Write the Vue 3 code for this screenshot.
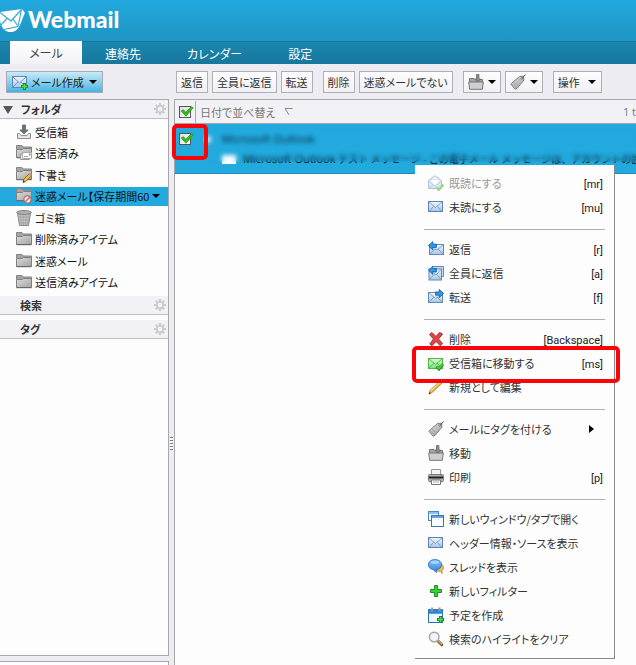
<script setup>
import { ref } from 'vue'

const tabs = ['メール', '連絡先', 'カレンダー', '設定']
const activeTab = ref('メール')

const folders = [
  { icon: 'inbox', name: '受信箱' },
  { icon: 'sent', name: '送信済み' },
  { icon: 'draft', name: '下書き' },
  { icon: 'spam', name: '迷惑メール【保存期間60', selected: true },
  { icon: 'trash', name: 'ゴミ箱' },
  { icon: 'folder', name: '削除済みアイテム' },
  { icon: 'folder', name: '迷惑メール' },
  { icon: 'folder', name: '送信済みアイテム' }
]

const toolGroups = [
  [{ label: '返信' }, { label: '全員に返信' }, { label: '転送' }],
  [{ label: '削除' }, { label: '迷惑メールでない' }],
  [{ icon: 'move', title: '移動', menu: true }, { icon: 'tag', title: 'タグ', menu: true }],
  [{ label: '操作', menu: true }]
]

const menuGroups = [
  [
    { icon: 'read', label: '既読にする', key: '[mr]', disabled: true },
    { icon: 'mail', label: '未読にする', key: '[mu]' }
  ],
  [
    { icon: 'reply', label: '返信', key: '[r]' },
    { icon: 'replyall', label: '全員に返信', key: '[a]' },
    { icon: 'forward', label: '転送', key: '[f]' }
  ],
  [
    { icon: 'delete', label: '削除', key: '[Backspace]' },
    { icon: 'notspam', label: '受信箱に移動する', key: '[ms]', marked: true },
    { icon: 'pencil', label: '新規として編集' }
  ],
  [
    { icon: 'tag', label: 'メールにタグを付ける', submenu: true },
    { icon: 'move', label: '移動' },
    { icon: 'print', label: '印刷', key: '[p]' }
  ],
  [
    { icon: 'windows', label: '新しいウィンドウ/タブで開く' },
    { icon: 'mail', label: 'ヘッダー情報・ソースを表示' },
    { icon: 'thread', label: 'スレッドを表示' },
    { icon: 'plus', label: '新しいフィルター' },
    { icon: 'calendar', label: '予定を作成' },
    { icon: 'search', label: '検索のハイライトをクリア' }
  ]
]

const allChecked = ref(true)
const rowChecked = ref(true)
</script>

<template>
  <div class="app">
    <svg class="defs" aria-hidden="true">
      <defs>
        <linearGradient id="gBlue" x1="0" y1="0" x2="0" y2="1"><stop offset="0" stop-color="#f0f6fd" /><stop offset="1" stop-color="#a9c7ea" /></linearGradient>
        <linearGradient id="gGreen" x1="0" y1="0" x2="0" y2="1"><stop offset="0" stop-color="#d8fbd2" /><stop offset="1" stop-color="#7fe07a" /></linearGradient>
        <linearGradient id="gGray" x1="0" y1="0" x2="1" y2="1"><stop offset="0" stop-color="#dcdcdc" /><stop offset="1" stop-color="#a3a3a3" /></linearGradient>
        <linearGradient id="gBubble" x1="0" y1="0" x2="0" y2="1"><stop offset="0" stop-color="#86c5fb" /><stop offset="1" stop-color="#2f7fdc" /></linearGradient>
      </defs>
      <symbol id="i-mail" viewBox="0 0 16 16">
        <rect x=".5" y="2.500" width="14" height="10" fill="url(#gBlue)" stroke="#5d84b5" />
        <path d="M1 3l6.500 5.500L14 3M1 12.500l4.500-5M14 12.500l-4.500-5" fill="none" stroke="#7698c4" stroke-width=".9" />
      </symbol>
      <symbol id="i-read" viewBox="0 0 16 16">
        <path d="M.5 5.500L7 .7l6.500 4.800v8H.5z" fill="url(#gBlue)" stroke="#6288b8" />
        <path d="M3 8V4.500h8V8L7 11z" fill="#fff" stroke="#a9bfdc" stroke-width=".7" />
        <path d="M1 6.500L7 11l6-4.500M1 13l4-3.500" fill="none" stroke="#7698c4" stroke-width=".9" />
        <path d="M8.500 12.500l2.300 2.300L15.500 9.500" fill="none" stroke="#39b21f" stroke-width="2.400" />
      </symbol>
      <symbol id="i-reply" viewBox="0 0 16 16">
        <rect x="1.500" y="3.500" width="14" height="10" fill="url(#gBlue)" stroke="#6288b8" />
        <path d="M2 13l5-5M15 13l-5-5M15 4L9 9 6.500 8" fill="none" stroke="#7698c4" stroke-width=".9" />
        <path d="M.4 4.700L4.800.6v2.500h3.600v3.300H4.800v2.500z" fill="#2f97e5" stroke="#135a9f" stroke-width=".8" />
      </symbol>
      <symbol id="i-replyall" viewBox="0 0 16 16">
        <path d="M5 1.500h10.500v10H13" fill="#c7dbf3" stroke="#6288b8" />
        <rect x="1" y="4" width="12.500" height="11" fill="url(#gBlue)" stroke="#6288b8" />
        <path d="M1.500 14.500l4.500-5M13 14.500l-4-5M13 4.500L8 10 6 8.500" fill="none" stroke="#7698c4" stroke-width=".9" />
        <path d="M.4 5.200l4.400-4v2.300h3.600v3.400H4.800v2.500z" fill="#2f97e5" stroke="#135a9f" stroke-width=".8" />
      </symbol>
      <symbol id="i-forward" viewBox="0 0 16 16">
        <rect x=".5" y="3.500" width="14" height="10" fill="url(#gBlue)" stroke="#6288b8" />
        <path d="M1 13l5-5M14 13l-5-5M1 4L7.500 9.500 10 8" fill="none" stroke="#7698c4" stroke-width=".9" />
        <path d="M15.600 4.500L11.200.4v2.500H7.600v3.300h3.600v2.500z" fill="#2f97e5" stroke="#135a9f" stroke-width=".8" />
      </symbol>
      <symbol id="i-delete" viewBox="0 0 16 16">
        <path d="M1.500 3.500L4 1.500 8 5.500l3.500-4L14.500 3 10.500 8l4 4.500-2.200 2.300L8 10.500 4 14.700 1.800 13l3.700-5z" fill="#d9474a" stroke="#b32a2e" />
      </symbol>
      <symbol id="i-notspam" viewBox="0 0 16 16">
        <rect x=".5" y="3.500" width="14" height="10" fill="url(#gGreen)" stroke="#4cb748" />
        <path d="M1 4l6.500 5.500L14 4M1 13l5-5M14 13L9 8" fill="none" stroke="#58bd54" />
        <path d="M8.500 11.500l2.500 2.700 4-5.200" fill="none" stroke="#218f1b" stroke-width="2.800" />
        <path d="M9 11.700l2 2 3.500-4.500" fill="none" stroke="#54d046" stroke-width="1.400" />
      </symbol>
      <symbol id="i-pencil" viewBox="0 0 16 16">
        <path d="M1 15l1-3.500L12 2l2 2L4 13.500z" fill="#f0be48" stroke="#9b6b1c" stroke-width=".8" />
        <path d="M11.500 2.500l1.700-1.800 2.100 2.100-1.800 1.700z" fill="#c88e92" stroke="#94555a" stroke-width=".6" />
        <path d="M2.500 12L12 3" stroke="#fff0b0" /><path d="M.8 15.200l.7-2.200 1.400 1.400z" fill="#333" />
      </symbol>
      <symbol id="i-tag" viewBox="0 0 16 16">
        <path d="M.7 10L9.500 2.500l4-.5.500 4-7 8.500-2 .7z" fill="url(#gGray)" stroke="#777" stroke-width=".9" />
        <path d="M2.500 10l4.500 4M4 8.500l5 4" stroke="#888" stroke-width=".6" />
        <circle cx="11.800" cy="4.300" r="1" fill="#fff" stroke="#555" stroke-width=".6" />
        <path d="M12 4.500L15.500.5" stroke="#555" />
      </symbol>
      <symbol id="i-move" viewBox="0 0 16 16">
        <path d="M1.500 8V4.500H6l1 1h7.500V8" fill="#a6a6a6" stroke="#757575" />
        <path d="M.7 8h14.600l-1 7.300H1.700z" fill="#cfcfcf" stroke="#757575" />
        <path d="M8.500.5h2.400v4.500h1.800L9.700 8 6.700 5h1.800z" fill="#8d8d8d" stroke="#646464" stroke-width=".8" />
      </symbol>
      <symbol id="i-print" viewBox="0 0 16 16">
        <path d="M3.500 6V.5h9V6" fill="#f4f4f4" stroke="#999" />
        <rect x=".5" y="5.500" width="15" height="7" rx="1" fill="#b4b4b4" stroke="#777" />
        <path d="M1 7.500h14v2H1z" fill="#222" /><path d="M12 6.500h2" stroke="#4fc44f" />
        <path d="M3.500 11h9v4.500h-9z" fill="#fff" stroke="#777" /><path d="M5 13h6" stroke="#aaa" />
      </symbol>
      <symbol id="i-windows" viewBox="0 0 16 16">
        <rect x=".5" y=".5" width="10" height="9" fill="#f4f9ff" stroke="#4b86c2" /><path d="M1 2h9" stroke="#8fc2f2" stroke-width="2" />
        <rect x="3.500" y="4.500" width="12" height="11" fill="#f8fbff" stroke="#3c74ad" /><path d="M4 6h11" stroke="#5ea6e8" stroke-width="2" />
      </symbol>
      <symbol id="i-thread" viewBox="0 0 16 16">
        <path d="M8 11c2 2 4 1.500 5 1l1 2.800v-3.300c2-1.500 2-4.500 0-6z" fill="#e6b95c" stroke="#b98a31" stroke-width=".8" />
        <path d="M7 .6c8.500 0 8.500 9.600 1 10L8.500 13.500 5 10.500C-1.500 9.500-1.500.6 7 .6z" fill="url(#gBubble)" stroke="#2669b5" stroke-width=".8" />
        <ellipse cx="6.800" cy="3.200" rx="4.200" ry="1.500" fill="#b7defe" opacity=".8" />
      </symbol>
      <symbol id="i-plus" viewBox="0 0 16 16">
        <path d="M6.500 2.500h3v4h4v3h-4v4h-3v-4h-4v-3h4z" fill="#39cf37" stroke="#17952a" stroke-linejoin="round" />
      </symbol>
      <symbol id="i-calendar" viewBox="0 0 16 16">
        <rect x=".5" y="2.500" width="14" height="13" fill="#eef5fd" stroke="#2b72bb" />
        <path d="M.5 4.500h14.500" stroke="#2c82d8" stroke-width="4.500" /><path d="M4 .5v4M11.500.5v4" stroke="#999" stroke-width="2" />
        <path d="M12.500 9v7M9 12.500h7" stroke="#158c25" stroke-width="3.200" /><path d="M12.500 10v5M10 12.500h5" stroke="#4ade48" stroke-width="1.500" />
      </symbol>
      <symbol id="i-search" viewBox="0 0 16 16">
        <path d="M10 10l3.800 3.800" stroke="#6a5436" stroke-width="3" stroke-linecap="round" /><path d="M10 9.500l4 4" stroke="#d8b064" stroke-width="1.400" />
        <circle cx="6.200" cy="6" r="4.800" fill="#edf5fc" stroke="#a5a5a5" stroke-width="1.500" />
      </symbol>
      <symbol id="i-folder" viewBox="0 0 16 16">
        <path d="M.5 5V1.500h5.500l1 1.500h8.500v2" fill="#a4a4a4" stroke="#858585" />
        <path d="M.5 5.500h6l1-1h8v9H.5z" fill="url(#gGray)" stroke="#808080" /><path d="M.5 13.700h15" stroke="#666" />
      </symbol>
      <symbol id="i-sent" viewBox="0 0 16 16">
        <use href="#i-folder" y="-1" />
        <path d="M4.500 9h9v5.500h-9z" fill="#eee" stroke="#999" /><path d="M6.500 7.500h9v6h-9z" fill="#fff" stroke="#aaa" />
        <path d="M13 8.500h1.500v2H13z" fill="#5c87c8" /><path d="M8 11.500h4" stroke="#aaa" />
      </symbol>
      <symbol id="i-draft" viewBox="0 0 16 16">
        <use href="#i-folder" y="-1" />
        <path d="M7 15.300l.8-3 5.500-5.500 2.200 2.200-5.700 5.500z" fill="#f0be48" stroke="#7a5117" stroke-width=".8" />
        <path d="M12.500 7.500L14 6l2 2-1.500 1.500z" fill="#d98d8f" /><path d="M7 15.400l.5-1.900 1.400 1.400z" fill="#222" />
      </symbol>
      <symbol id="i-spam" viewBox="0 0 16 16">
        <use href="#i-folder" y="-1" />
        <circle cx="11.500" cy="11.500" r="3.600" fill="#f7eeee" stroke="#b66d6d" stroke-width="1.400" /><path d="M9 14l5-5" stroke="#b66d6d" stroke-width="1.400" />
      </symbol>
      <symbol id="i-inbox" viewBox="0 0 16 16">
        <path d="M1.500 9.500v5h13v-5h-2l-1.500 2H5L3.500 9.500z" fill="#e4e4e4" stroke="#909090" />
        <path d="M6.500 1h3v5h2.700L8 10 3.800 6h2.700z" fill="#67776b" stroke="#4f5d53" stroke-width=".7" />
      </symbol>
      <symbol id="i-trash" viewBox="0 0 16 16">
        <path d="M1.500 3h13L12.500 15.500h-9z" fill="#c5c5c5" stroke="#888" />
        <path d="M4 4l1.500 11M7 4l.5 11M10 4l-.5 11M13 4l-2 11M2.500 7h11M3 10h10M3.500 13h9" stroke="#999" stroke-width=".6" />
        <ellipse cx="8" cy="2.500" rx="7.300" ry="1.900" fill="#b2b2b2" stroke="#808080" />
      </symbol>
      <symbol id="i-compose" viewBox="0 0 16 16">
        <rect x=".5" y="2.500" width="14" height="11" fill="url(#gBlue)" stroke="#6288b8" />
        <path d="M1 3l6.500 6L14 3M1 13l5-5M14 13L9 8" fill="none" stroke="#7698c4" />
        <path d="M12.500 9v7M9 12.500h7" stroke="#158c25" stroke-width="3.200" /><path d="M12.500 10v5M10 12.500h5" stroke="#4ade48" stroke-width="1.500" />
      </symbol>
      <symbol id="i-gear" viewBox="0 0 12 12">
        <circle cx="6" cy="6" r="3.300" fill="none" stroke="#c9cacf" stroke-width="1.800" />
        <path d="M6 0v2M6 10v2M0 6h2M10 6h2M1.800 1.800l1.400 1.400M8.800 8.800l1.400 1.400M1.800 10.200l1.400-1.400M8.800 3.200l1.400-1.400" stroke="#c9cacf" stroke-width="2" />
      </symbol>
      <symbol id="i-check" viewBox="0 0 14 12">
        <path d="M1 5L3.500 3.700l2.200 2.600L11.300.7l2 1L6 10.300z" fill="#35b81e" stroke="#2a9a1c" stroke-width=".7" />
      </symbol>
    </svg>

    <header class="brand">
      <svg class="mark" viewBox="0 0 25 26" aria-hidden="true">
        <path d="M0 8C-1 20 5 26 12 25c6-.5 8-7 10-12 1-3 2-5 3-7l-3-4L0 5z" fill="#fff" />
        <path d="M21.500 2.500L18 19.500 4 22.500" fill="none" stroke="#239fd0" />
        <path d="M0 5.500L11 14 21.500 2.500M0 19l7-7.500M17.500 18.500L13 12" fill="none" stroke="#45abd6" stroke-width="1.300" />
      </svg>
      <h1>Webmail</h1>
    </header>

    <nav class="tabs">
      <button v-for="t in tabs" :key="t" type="button" :class="{ active: t === activeTab }" @click="activeTab = t">{{ t }}</button>
    </nav>

    <div class="toolbar">
      <div class="left-tools">
        <button type="button" class="compose">
          <svg class="icon"><use href="#i-compose" /></svg><span>メール作成</span><i class="caret"></i>
        </button>
      </div>
      <div class="groups">
        <div v-for="(g, gi) in toolGroups" :key="gi" class="group">
          <button v-for="b in g" :key="b.label || b.icon" type="button" class="tool" :aria-label="b.title">
            <svg v-if="b.icon" class="icon"><use :href="'#i-' + b.icon" /></svg>
            <span v-if="b.label">{{ b.label }}</span>
            <i v-if="b.menu" class="caret" :class="{ far: b.label }"></i>
          </button>
        </div>
      </div>
    </div>

    <div class="body">
      <aside class="side">
        <div class="panel grow">
          <h2 class="bar"><i class="twisty"></i><span>フォルダ</span><svg class="gear"><use href="#i-gear" /></svg></h2>
          <ul class="folders">
            <li v-for="(f, i) in folders" :key="i" :class="{ selected: f.selected }">
              <svg class="icon"><use :href="'#i-' + f.icon" /></svg>
              <span>{{ f.name }}</span>
              <i v-if="f.selected" class="caret"></i>
            </li>
          </ul>
          <h2 class="bar"><span>検索</span><svg class="gear"><use href="#i-gear" /></svg></h2>
          <h2 class="bar spaced"><span>タグ</span><svg class="gear"><use href="#i-gear" /></svg></h2>
        </div>
        <div class="panel stub"></div>
      </aside>

      <div class="splitter"><i class="grip"></i></div>

      <main class="list">
        <div class="list-head">
          <label class="check"><input v-model="allChecked" type="checkbox" aria-label="すべて選択"><svg v-if="allChecked"><use href="#i-check" /></svg></label>
          <button type="button" class="sort">日付で並べ替え
            <svg viewBox="0 0 9 8" aria-hidden="true"><path d="M5 7L1 .5h7.500" fill="none" stroke="#888" /></svg>
          </button>
          <span class="count">1 t</span>
        </div>
        <div class="message">
          <label class="check marked"><input v-model="rowChecked" type="checkbox" aria-label="メッセージを選択"><svg v-if="rowChecked"><use href="#i-check" /></svg></label>
          <i class="dot"></i>
          <div class="lines">
            <div class="from">Microsoft Outlook</div>
            <div class="subject"><i class="note"></i><span><span class="latin">Microsoft Outlook</span> テスト メッセージ - この電子メール メッセージは、アカウントの設定</span></div>
          </div>
          <i class="veil"></i>
        </div>
      </main>
    </div>

    <div class="menu">
      <ul v-for="(g, gi) in menuGroups" :key="gi">
        <li v-for="m in g" :key="m.label" :class="{ marked: m.marked }">
          <button type="button" :disabled="m.disabled">
            <svg class="icon"><use :href="'#i-' + m.icon" /></svg>
            <span class="label">{{ m.label }}</span>
            <span v-if="m.key" class="key">{{ m.key }}</span>
            <i v-if="m.submenu" class="sub"></i>
          </button>
        </li>
      </ul>
    </div>
  </div>
</template>

<style>
body { margin: 0; }
</style>

<style scoped>
* { box-sizing: border-box; }
.app {
  position: relative; display: flex; flex-direction: column; height: 100vh; overflow: hidden;
  background: #edecf2; color: #222;
  font-family: "Noto Sans CJK JP", sans-serif; font-size: 11px; line-height: 16px;
  font-feature-settings: "palt";
}
button { font: inherit; color: inherit; font-feature-settings: inherit; margin: 0; padding: 0; border: 0; background: none; white-space: nowrap; }
ul, h1, h2 { margin: 0; padding: 0; list-style: none; }
.defs { position: absolute; width: 0; height: 0; }
.icon { width: 16px; height: 16px; flex: none; }
.caret { width: 0; height: 0; border: 4px solid transparent; border-top-color: #000; border-bottom: 0; flex: none; }

.brand { display: flex; align-items: flex-start; flex: none; height: 41px; background: linear-gradient(#22aadf, #1f94c2); color: #fff; }
.mark { width: 25px; height: 26px; margin-top: 7px; }
.brand h1 { margin: 3px 0 0 3px; font: 900 23px/32px Lato, sans-serif; }

.tabs { display: flex; flex: none; height: 23px; padding-left: 10px; background: linear-gradient(#1b86ae, #17779d); border-top: 1px solid #17769c; }
.tabs button { padding: 0 23px; color: #fff; font-size: 12px; line-height: 19px; }
.tabs .active { width: 72px; padding: 0; background: linear-gradient(#fff, #f2f1f6); color: #444; margin-top: -1px; line-height: 23px; }

.toolbar { display: flex; flex: none; height: 35px; padding-top: 7px; }
.left-tools { width: 176px; flex: none; padding-left: 6px; }
.compose { display: flex; align-items: center; width: 97px; height: 22px; padding: 0 5px 0 5px; border: 1px solid #a9abb0; background: linear-gradient(#c9eaf7, #48b4e0); }
.compose span { margin-left: 3px; flex: 1; text-align: left; }
.groups { display: flex; gap: 10px; }
.group { display: flex; gap: 4px; }
.tool { display: flex; align-items: center; height: 22px; padding: 0 4px; border: 1px solid #b0b0b4; background: linear-gradient(#fdfdfe, #f1f0f5); color: #333; }
.tool .caret { margin-left: 4px; }
.tool .far { margin-left: 8px; margin-right: 1px; }

.body { display: flex; flex: 1; min-height: 0; }
.side { display: flex; flex-direction: column; width: 169px; flex: none; gap: 5px; }
.panel { background: #fdfdfd; border: 1px solid #a7a6aa; border-left: 0; }
.grow { flex: 1; }
.stub { height: 4px; border-bottom: 0; }
.bar { display: flex; align-items: center; height: 19px; padding: 0 2px 0 20px; background: #f2f1f6; border-bottom: 1px solid #bfbec3; font-size: 11px; line-height: 16px; font-weight: 700; color: #333; }
.bar span { flex: 1; }
.bar.spaced { margin-top: 5px; }
.twisty { width: 0; height: 0; margin: 2px 8px 0 -17px; border: 5px solid transparent; border-top: 8px solid #555; border-bottom: 0; }
.gear { width: 12px; height: 12px; }
.folders { display: flex; flex-direction: column; justify-content: space-between; height: 177px; padding: 3px 0 4px; }
.folders li { display: flex; align-items: center; gap: 3px; height: 19px; padding-left: 16px; white-space: nowrap; color: #111; }
.folders .selected { background: #22a9de; }

.splitter { display: flex; flex-direction: column; align-items: center; width: 5px; flex: none; }
.splitter::before { content: ""; flex: 11; }
.splitter::after { content: ""; flex: 7; }
.grip { width: 3px; height: 13px; background: repeating-linear-gradient(#777 0 1px, #fff 1px 3px); }

.list { flex: 1; min-width: 0; background: #fdfdfd; border: 1px solid #a7a6aa; border-width: 1px 0 0 1px; }
.list-head { display: flex; align-items: center; height: 24px; padding-left: 4px; background: #f2f1f6; border-bottom: 1px solid #a7a6aa; color: #777; }
.check { position: relative; display: block; width: 12px; height: 12px; flex: none; }
.check input { appearance: none; display: block; width: 12px; height: 12px; margin: 0; border: 1px solid #555; background: linear-gradient(135deg, #ddd, #fff); }
.check svg { position: absolute; left: 1px; top: 0; width: 14px; height: 12px; }
.sort { display: flex; align-items: center; gap: 9px; height: 22px; margin-left: 4px; padding-left: 4px; border-left: 1px solid #aaa; }
.sort svg { width: 9px; height: 8px; }
.count { margin-left: auto; white-space: nowrap; font: 11px/16px "Open Sans", sans-serif; color: #6c7d78; }
.message { position: relative; display: flex; height: 50px; padding: 9px 0 0 4px; background: #22a9de; border-bottom: 1px solid #178abb; }
.check.marked::after { content: ""; position: absolute; inset: -9px -17px -15px -7px; border: 4px solid #f80509; border-radius: 5px; z-index: 2; }
.dot { width: 7px; height: 7px; margin: 3px 0 0 13px; border-radius: 50%; background: #e4f3fa; flex: none; }
.lines { min-width: 0; padding-left: 11px; overflow: hidden; font: 11px/20px "Open Sans", "Noto Sans CJK JP", sans-serif; margin-top: -4px; white-space: nowrap; }
.from { color: #062f45; }
.subject { display: flex; align-items: center; gap: 7px; font-size: 10px; color: #00151f; }
.latin { font-size: 11px; }
.note { width: 14px; height: 9px; background: #f5fafd; flex: none; }
.veil { position: absolute; left: 28px; right: 0; top: 4px; height: 34px; backdrop-filter: blur(2px); }

.menu { position: absolute; left: 415px; top: 165px; width: 200px; padding: 6px 0 7px; background: #fdfdfd; border: 1px solid #888; border-width: 0 1px 1px 0; }
.menu ul + ul::before { content: ""; display: block; height: 1px; margin: 10px 9px 7px; background: #b0b0b0; }
.menu li { position: relative; }
.menu button { display: flex; align-items: center; gap: 5px; width: 100%; height: 24px; padding: 0 11px 0 13px; text-align: left; color: #333; }
.menu button:disabled { color: #999; }
.menu button:disabled .icon { opacity: .5; }
.label { flex: 1; }
.key { padding-top: 3px; font-family: Roboto, sans-serif; font-size: 11px; color: #222; }
.sub { width: 0; height: 0; margin-right: 9px; border: 4px solid transparent; border-left: 5px solid #000; border-right: 0; }
.menu .marked { z-index: 1; }
.menu .marked::after { content: ""; position: absolute; inset: -5px -6px -8px -3px; border: 4px solid #f80509; border-radius: 5px; pointer-events: none; }
</style>
